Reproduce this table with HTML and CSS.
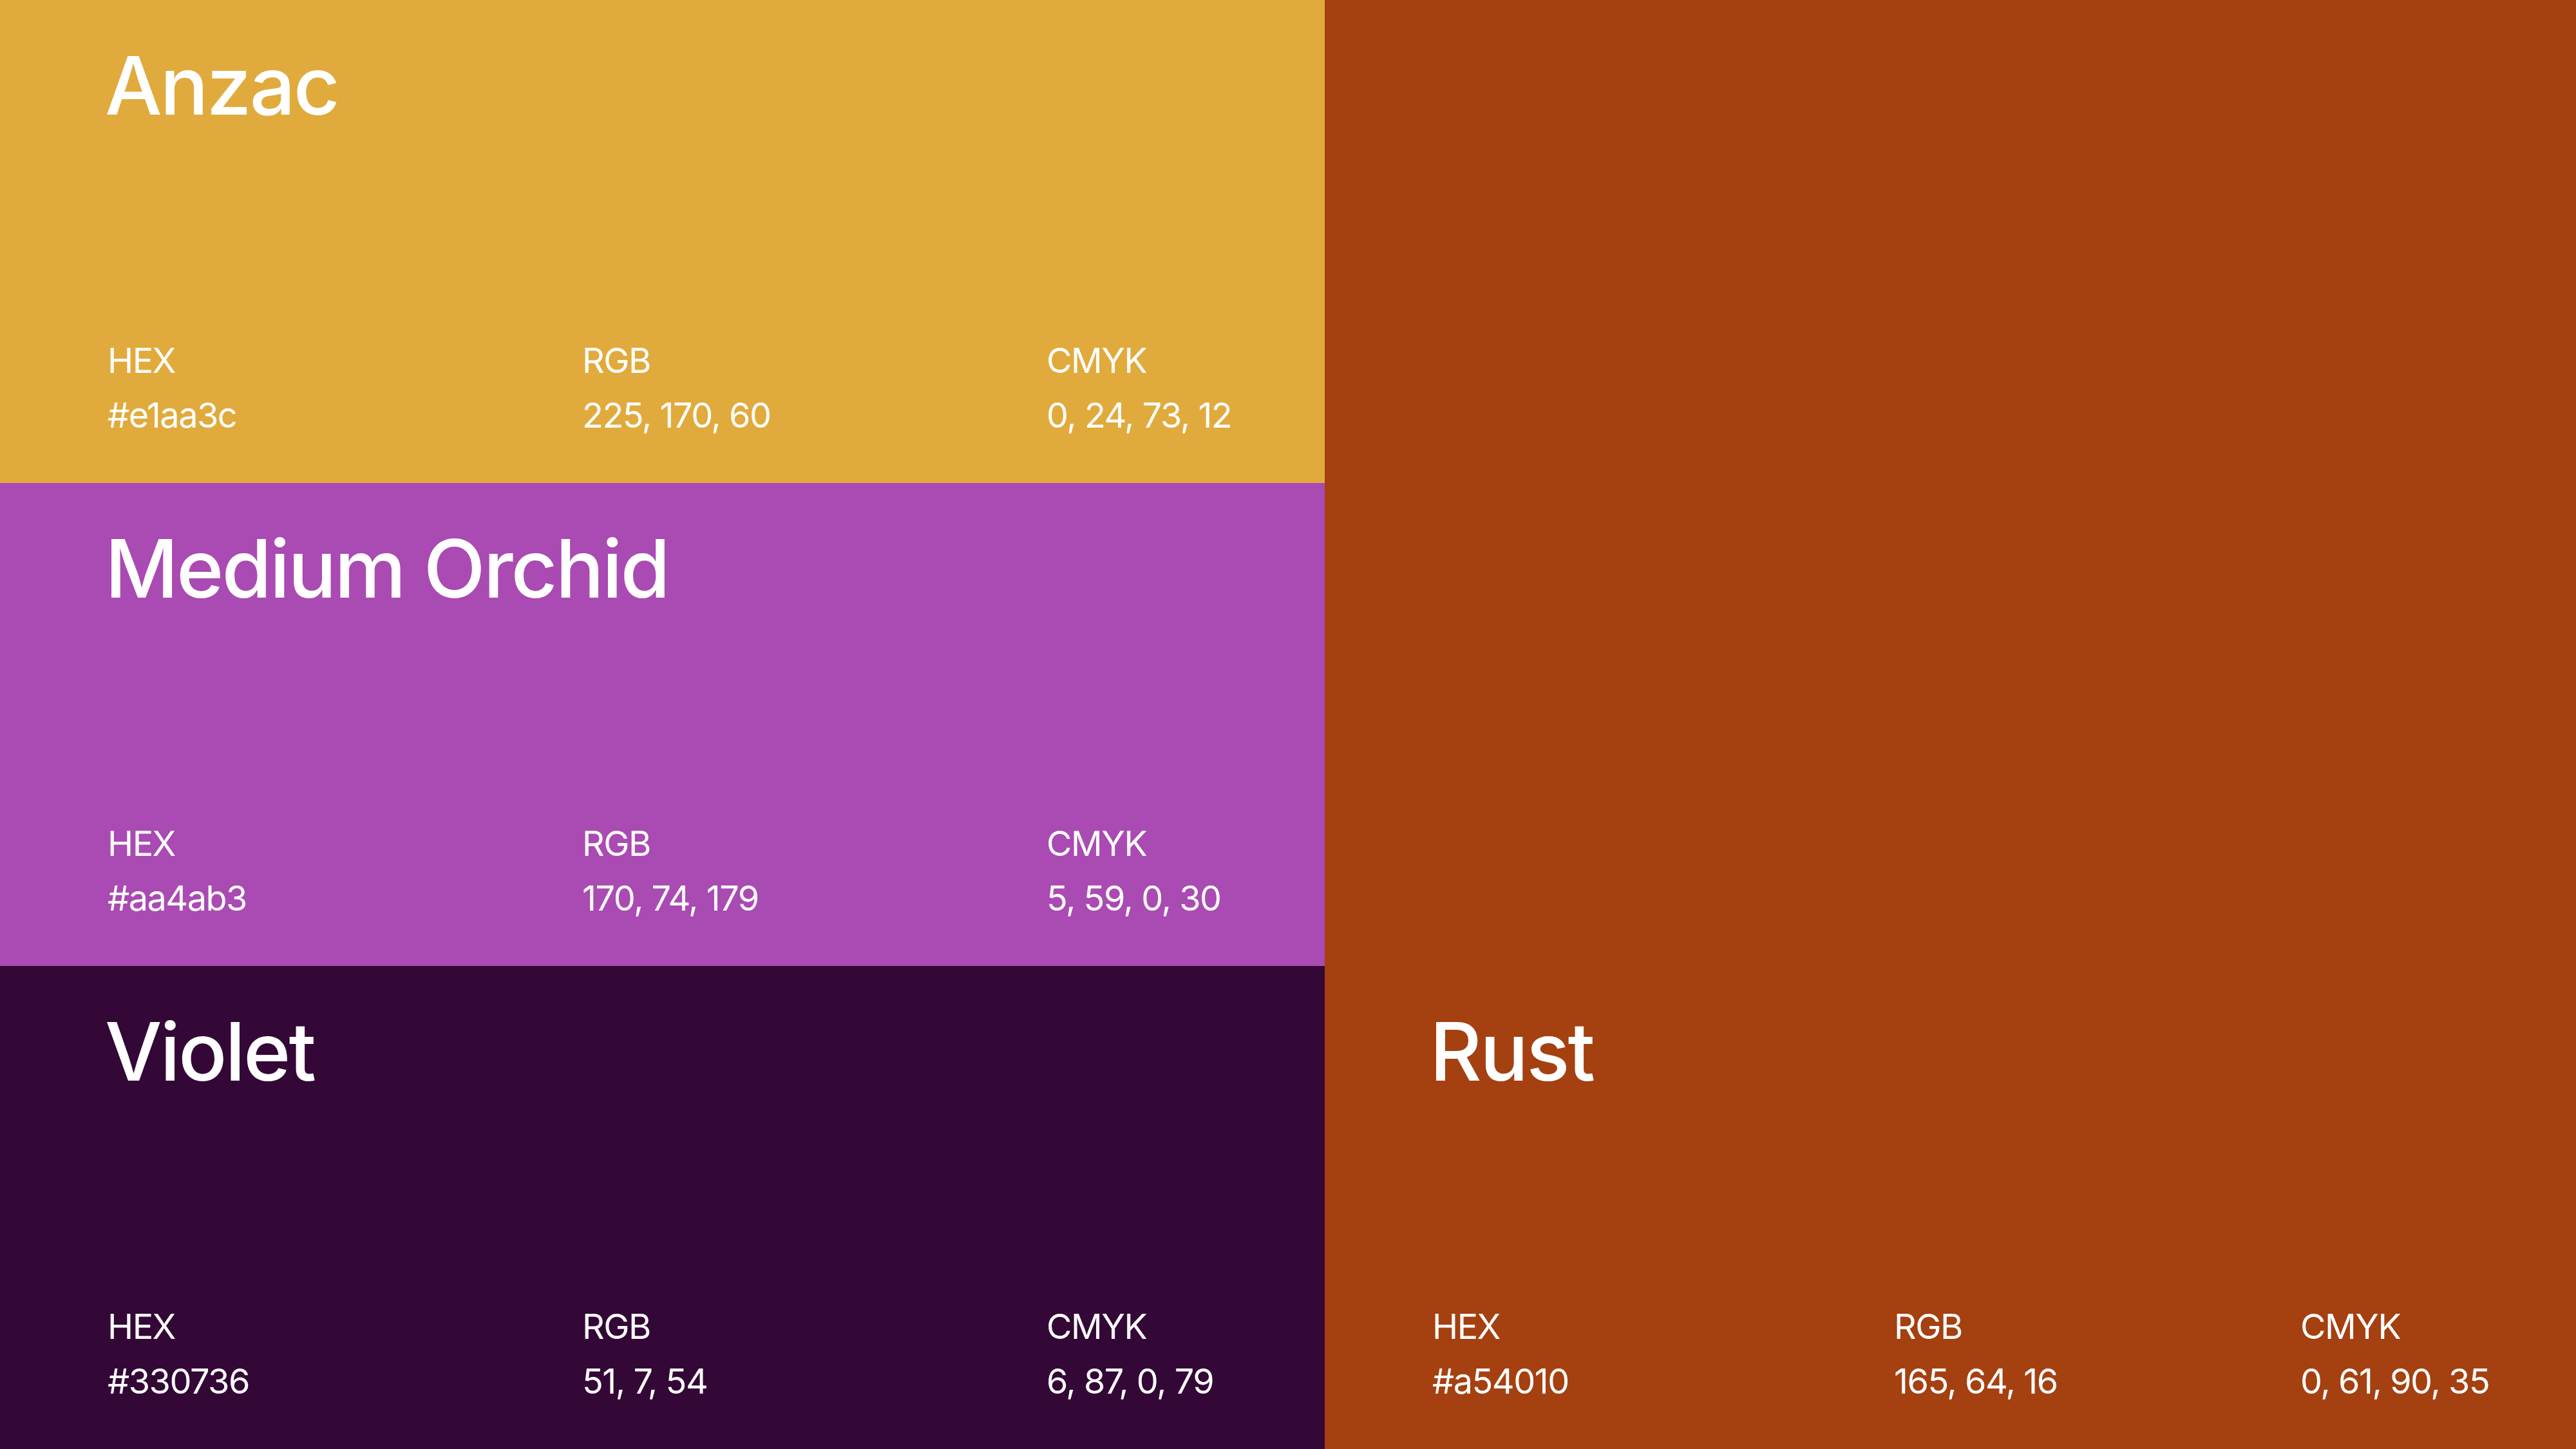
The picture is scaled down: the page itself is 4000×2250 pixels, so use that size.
FILE: index.html
```html
<!DOCTYPE html>
<html lang="en">
<head>
<meta charset="utf-8">
<title>Palette</title>
<link rel="stylesheet" href="styles.css">
</head>
<body>
<main class="palette">
  <section class="swatch swatch--anzac">
    <div class="swatch-body">
      <h2 class="swatch-name">Anzac</h2>
      <div class="codes">
        <div class="code"><span class="code-label">HEX</span><span class="code-value">#e1aa3c</span></div>
        <div class="code"><span class="code-label">RGB</span><span class="code-value">225, 170, 60</span></div>
        <div class="code"><span class="code-label">CMYK</span><span class="code-value">0, 24, 73, 12</span></div>
      </div>
    </div>
  </section>
  <section class="swatch swatch--rust">
    <div class="swatch-body">
      <h2 class="swatch-name">Rust</h2>
      <div class="codes codes--right">
        <div class="code"><span class="code-label">HEX</span><span class="code-value">#a54010</span></div>
        <div class="code"><span class="code-label">RGB</span><span class="code-value">165, 64, 16</span></div>
        <div class="code"><span class="code-label">CMYK</span><span class="code-value">0, 61, 90, 35</span></div>
      </div>
    </div>
  </section>
  <section class="swatch swatch--orchid">
    <div class="swatch-body">
      <h2 class="swatch-name">Medium Orchid</h2>
      <div class="codes">
        <div class="code"><span class="code-label">HEX</span><span class="code-value">#aa4ab3</span></div>
        <div class="code"><span class="code-label">RGB</span><span class="code-value">170, 74, 179</span></div>
        <div class="code"><span class="code-label">CMYK</span><span class="code-value">5, 59, 0, 30</span></div>
      </div>
    </div>
  </section>
  <section class="swatch swatch--violet">
    <div class="swatch-body">
      <h2 class="swatch-name">Violet</h2>
      <div class="codes">
        <div class="code"><span class="code-label">HEX</span><span class="code-value">#330736</span></div>
        <div class="code"><span class="code-label">RGB</span><span class="code-value">51, 7, 54</span></div>
        <div class="code"><span class="code-label">CMYK</span><span class="code-value">6, 87, 0, 79</span></div>
      </div>
    </div>
  </section>
</main>
</body>
</html>
```

FILE: styles.css
```css
html, body {
  margin: 0;
  padding: 0;
}

body {
  font-family: Inter, "Liberation Sans", sans-serif;
  color: #ffffff;
  width: 4000px;
  height: 2250px;
  overflow: hidden;
}

.palette {
  display: grid;
  grid-template-columns: 2057px 1fr;
  grid-template-rows: repeat(3, 750px);
  width: 4000px;
  height: 2250px;
}

.swatch {
  display: flex;
  flex-direction: column;
  justify-content: flex-end;
}

.swatch--anzac { background: #e1aa3c; grid-column: 1; grid-row: 1; }
.swatch--orchid { background: #aa4ab3; grid-column: 1; grid-row: 2; }
.swatch--violet { background: #330736; grid-column: 1; grid-row: 3; }
.swatch--rust { background: #a54010; grid-column: 2; grid-row: 1 / span 3; }

.swatch-body {
  box-sizing: border-box;
  height: 750px;
  flex: none;
  display: flex;
  flex-direction: column;
  justify-content: space-between;
  padding: 70px 60px 78px 167px;
}

.swatch-name {
  margin: 0 0 0 -4px;
  font-size: 125px;
  line-height: 125px;
  font-weight: 500;
  letter-spacing: -3px;
  white-space: nowrap;
}

.codes {
  display: grid;
  grid-template-columns: 737px 721px auto;
}

.codes--right {
  grid-template-columns: 717px 631px auto;
}

.code {
  display: flex;
  flex-direction: column;
  gap: 31px;
}

.code-label,
.code-value {
  font-size: 54px;
  line-height: 54px;
  font-weight: 400;
  letter-spacing: -1.5px;
  white-space: nowrap;
}
```
